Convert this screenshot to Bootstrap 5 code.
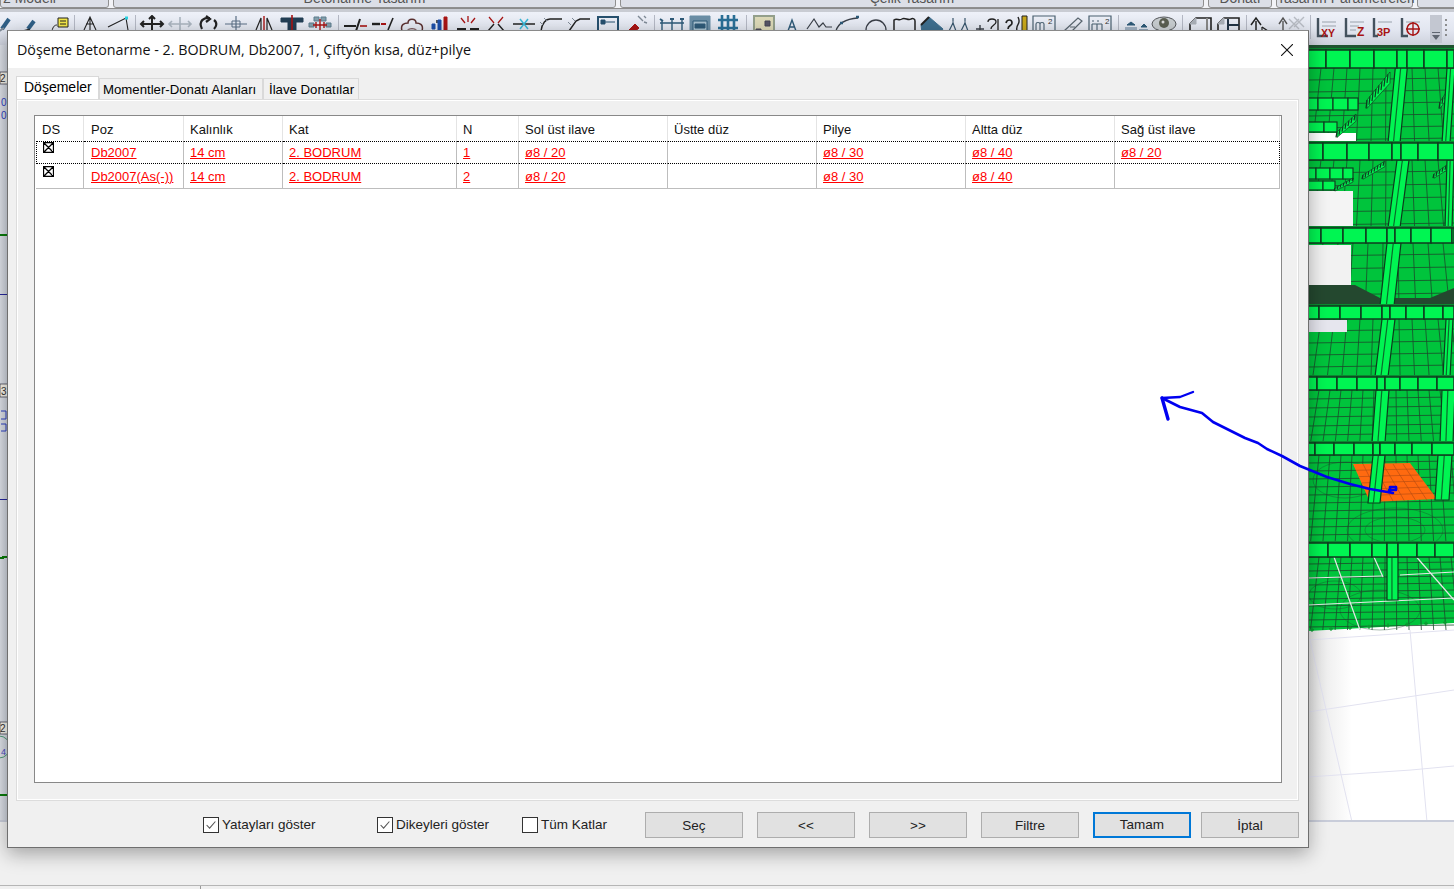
<!DOCTYPE html>
<html lang="tr">
<head>
    <meta charset="UTF-8">
    <meta name="viewport" content="width=device-width, initial-scale=1.0">
    <title>Döşeme Betonarme</title>
    <link href="https://cdn.jsdelivr.net/npm/bootstrap@5.3.1/dist/css/bootstrap.min.css" rel="stylesheet">
    <style>
        html, body { height: 100%; overflow: hidden; }
        body { background-color: #f0f0f0; font-family: "Liberation Sans", Arial, sans-serif; font-size: 13px; color: #000; }
        .app-shell { position: relative; width: 1454px; height: 889px; }

        /* ribbon behind the dialog */
        .ribbon-tabs { height: 9px; overflow: hidden; background: #f2f3f7; border-bottom: 1px solid #8b8b8b; align-items: flex-end; }
        .ribbon-tab { height: 30px; flex: none; margin-right: 4px; text-align: center; white-space: nowrap; font-size: 14px; line-height: 16px; color: #555; padding-top: 11px;
            background: #dcdfe7; border: 1px solid #8f8f8f; border-radius: 0 0 3px 3px; }
        .rt-1 { width: 109px; text-align: left; padding-left: 2px; }
        .rt-2 { width: 503px; }
        .rt-3 { width: 584px; }
        .rt-4 { width: 64px; }
        .rt-5 { width: 137px; }
        .rt-6 { width: 60px; margin-right: 0; }
        .ribbon-gap { height: 3px; background: #c9ccd3; }
        .ribbon-bar { height: 33px; background: linear-gradient(#eef1f9, #e2e6f0 55%, #cdd1dc); padding-top: 3px; overflow: hidden; }
        .tool-slot { width: 28px; height: 28px; flex: none; }
        .tool-slot svg { display: block; }
        .tool-sep { width: 1px; height: 24px; margin: 0 3.5px; flex: none; background: #b4b8c4; }
        .tool-sep.is-tight { margin: 0 1.5px; }
        .tool-sep.is-mid { margin: 0 2.5px; }
        .first-gap { width: 0; margin-left: -12px; flex: none; }
        .grip { width: 12px; height: 28px; margin: 0 0 0 4px; flex: none; background: #c3c7d1; }
        .grip svg { display: block; }
        .grip-dots { width: 8px; flex: none; }

        .work-area { height: 777px; background: #dfe2ea; border-bottom: 2px solid #c9cdda; }
        .left-strip { width: 8px; flex: none; background: linear-gradient(90deg, #dde0e7, #cbd0da); }
        .work-fill { flex: 1 1 auto; }
        .scene { width: 146px; height: 775px; flex: none; background: #fff; display: block; }
        .status-line { margin-top: 63px; height: 1px; background: #b5b5b5; }
        .status-tick { width: 1px; height: 3px; margin-left: 200px; background: #999; }

        /* dialog window */
        .dlg-window { position: absolute; left: 7px; top: 30px; width: 1302px; height: 818px; background: #f0f0f0;
            border: 1px solid #6f6f6f; border-top-color: #8a8a8a; box-shadow: 0 6px 18px rgba(0, 0, 0, .32); }
        .dlg-title { height: 37px; background: #fff; padding-left: 9px; padding-right: 15px; font-family: "Open Sans", sans-serif; font-size: 14.3px; color: #111; }
        .dlg-close { width: 12px; height: 12px; padding: 0; border: 0; background: none; line-height: 0; }

        .dlg-tabs { margin: 8px 0 0 8px; border-bottom: 0; height: 23px; align-items: flex-end; }
        .dlg-tabs .nav-link { height: 21px; padding: 2px 0 0 3px; margin: 0; font-size: 13.2px; line-height: 18px; color: #000; background: #f0f0f0;
            border: 1px solid #d9d9d9; border-bottom: 0; border-radius: 0; }
        .dlg-tabs .tab-mom { width: 164px; }
        .dlg-tabs .tab-ilave { width: 96px; padding-left: 5px; }
        .dlg-tabs .nav-link.active { width: 83px; height: 23px; padding: 1px 0 0 7px; font-size: 14px; background: #fff; color: #000; border-color: #d9d9d9; }
        .tab-panel { height: 702px; margin: 0 9px 0 8px; padding: 15px 16px 17px 17px; background: #f0f0f0; border: 1px solid #dcdcdc; box-shadow: inset 1px 1px 0 #fff, inset -1px -1px 0 #fff; }
        .grid-box { height: 668px; padding: 0 0 0 1px; background: #fff; border: 1px solid #888; }

        .grid-table { table-layout: fixed; width: 1244px; margin: 0; border-collapse: separate; border-spacing: 0; font-size: 13px; line-height: 16px; --bs-table-bg: transparent; }
        .grid-table > thead > tr > th, .grid-table > tbody > tr > td { padding: 0 0 0 6px; border: 0; overflow: hidden; white-space: nowrap; }
        .grid-table > thead > tr > th { height: 25px; padding-top: 6px; font-weight: 400; color: #111; border-right: 1px solid #e4e4e4; vertical-align: top; }
        .grid-table > tbody > tr > td { height: 25px; padding-top: 5px; vertical-align: top; border-right: 1px solid #bdbdbd; border-bottom: 1px solid #bdbdbd; }
        .grid-table > tbody > tr:first-child > td { height: 23px; padding-top: 3px; border-top: 1px dotted #000; border-bottom: 1px dotted #000; }
        .grid-table > tbody > tr:first-child > td:first-child { border-left: 1px dotted #000; padding-left: 6px; padding-top: 0; }
        .grid-table > tbody > tr:first-child > td:last-child { border-right: 1px dotted #000; }
        .grid-table > tbody > tr > td:first-child { padding-left: 7px; padding-top: 2px; }
        .grid-table th:nth-child(2), .grid-table td:nth-child(2) { padding-left: 7px; }
        .c-ds { width: 48px; } .c-poz { width: 100px; } .c-kal { width: 99px; } .c-kat { width: 174px; } .c-n { width: 62px; }
        .c-d { width: 149px; } .c-sag { width: 165px; }
        .grid-link { color: #f00; text-decoration: underline; }
        .ds-mark { display: block; margin-top: 0; }

        .dlg-foot { height: 26px; margin-top: 11px; padding-left: 195px; font-size: 13.5px; }
        .foot-check { margin: 0; padding: 0; min-height: 0; color: #222; }
        .foot-check label { padding-top: 1px; }
        .foot-check .form-check-input { float: none; flex: none; width: 16px; height: 16px; margin: 0 3px 0 0; border: 1px solid #333; border-radius: 0; box-shadow: none; background-color: #fff; }
        .foot-check .form-check-input:checked { background-color: #fff; border-color: #333;
            background-image: url("data:image/svg+xml,%3csvg xmlns='http://www.w3.org/2000/svg' viewBox='0 0 16 16'%3e%3cpath fill='none' stroke='%23555' stroke-width='1.2' d='M3 8l3.4 3.6L13 4'/%3e%3c/svg%3e"); background-size: 100%; }
        .chk-a { width: 174px; } .chk-b { width: 145px; } .chk-c { width: 123px; }
        .foot-btn { width: 98px; height: 26px; padding: 1px 0 0; margin-right: 14px; font-size: 13.5px; line-height: 23px; color: #222; background: #e1e1e1; border: 1px solid #adadad; border-radius: 0; }
        .foot-btn.is-default { border: 2px solid #0078d7; padding-top: 0; line-height: 22px; margin-right: 10px; }
        .foot-btn.is-last { margin-right: 0; }

        .arrow-ink { position: absolute; left: 0; top: 0; width: 1454px; height: 889px; pointer-events: none; }
    </style>
</head>
<body>
<div class="app-shell">
    <!-- Ribbon -->
    <div class="ribbon-tabs d-flex">
        <div class="ribbon-tab rt-1">2 Modeli</div>
        <div class="ribbon-tab rt-2">Betonarme Tasarım</div>
        <div class="ribbon-tab rt-3">Çelik Tasarım</div>
        <div class="ribbon-tab rt-4">Donatı</div>
        <div class="ribbon-tab rt-5">Tasarım Parametreleri</div>
        <div class="ribbon-tab rt-6"></div>
    </div>
    <div class="ribbon-gap"></div>
    <div class="ribbon-bar d-flex" id="toolBar"></div>

    <!-- Drawing area -->
    <div class="work-area d-flex">
        <svg class="left-strip" viewBox="0 45 8 775" width="8" height="775">
            <rect x="0" y="72" width="8" height="12" fill="#f4f1e8" stroke="#334" stroke-width=".7"/>
            <text x="0" y="82" font-size="10" font-family="Liberation Sans" fill="#333">2</text>
            <text x="1" y="106" font-size="10" font-family="Liberation Sans" fill="#2a3fc0">0</text>
            <text x="1" y="119" font-size="10" font-family="Liberation Sans" fill="#2a3fc0">0</text>
            <rect x="0" y="234" width="8" height="2" fill="#0a7a0a"/>
            <rect x="0" y="294" width="8" height="1" fill="#26269a"/>
            <rect x="0" y="384" width="8" height="13" fill="#f4f1e8" stroke="#334" stroke-width=".7"/>
            <text x="1" y="395" font-size="10" font-family="Liberation Sans" fill="#333">3</text>
            <path d="M1 411h5v8h-5M1 424h5v7h-5" fill="none" stroke="#2a3fc0"/>
            <rect x="0" y="499" width="8" height="1" fill="#26269a"/>
            <path d="M0 558h3v-1h5" fill="none" stroke="#0a7a0a" stroke-width="2"/>
            <rect x="0" y="722" width="8" height="12" fill="#f4f1e8" stroke="#334" stroke-width=".7"/>
            <text x="0" y="732" font-size="10" font-family="Liberation Sans" fill="#333">2</text>
            <circle cx="-1" cy="747" r="11" fill="none" stroke="#2b8a5a" stroke-width=".8"/>
            <text x="1" y="755" font-size="9" font-family="Liberation Sans" fill="#4a4ac0">4</text>
            <rect x="0" y="794" width="8" height="2" fill="#0a7a0a"/>
        </svg>
        <div class="work-fill"></div>
        <svg class="scene" id="scene" viewBox="1308 45 146 775"></svg>
    </div>
    <div class="status-line"></div>
    <div class="status-tick"></div>

    <!-- Dialog -->
    <div class="dlg-window">
        <div class="dlg-title d-flex align-items-center justify-content-between">
            <span>Döşeme Betonarme - 2. BODRUM, Db2007, 1, Çiftyön kısa, düz+pilye</span>
            <button type="button" class="dlg-close" aria-label="Close">
                <svg width="12" height="12" viewBox="0 0 12 12"><path d="M0 0L12 12M12 0L0 12" stroke="#111" stroke-width="1.1"/></svg>
            </button>
        </div>
        <ul class="nav nav-tabs dlg-tabs">
            <li class="nav-item"><a class="nav-link active" href="#">Döşemeler</a></li>
            <li class="nav-item"><a class="nav-link tab-mom" href="#">Momentler-Donatı Alanları</a></li>
            <li class="nav-item"><a class="nav-link tab-ilave" href="#">İlave Donatılar</a></li>
        </ul>
        <div class="tab-panel">
            <div class="grid-box">
                <table class="table grid-table">
                    <colgroup>
                        <col class="c-ds"><col class="c-poz"><col class="c-kal"><col class="c-kat"><col class="c-n">
                        <col class="c-d"><col class="c-d"><col class="c-d"><col class="c-d"><col class="c-sag">
                    </colgroup>
                    <thead>
                    <tr>
                        <th>DS</th><th>Poz</th><th>Kalınlık</th><th>Kat</th><th>N</th>
                        <th>Sol üst ilave</th><th>Üstte düz</th><th>Pilye</th><th>Altta düz</th><th>Sağ üst ilave</th>
                    </tr>
                    </thead>
                    <tbody>
                    <tr>
                        <td><svg class="ds-mark" width="11" height="11" viewBox="0 0 11 11"><path d="M.5.5h10v10H.5zM.5.5l10 10M10.5.5l-10 10" fill="none" stroke="#000" stroke-width="1.3"/></svg></td>
                        <td><a class="grid-link" href="#">Db2007</a></td>
                        <td><a class="grid-link" href="#">14 cm</a></td>
                        <td><a class="grid-link" href="#">2. BODRUM</a></td>
                        <td><a class="grid-link" href="#">1</a></td>
                        <td><a class="grid-link" href="#">ø8 / 20</a></td>
                        <td></td>
                        <td><a class="grid-link" href="#">ø8 / 30</a></td>
                        <td><a class="grid-link" href="#">ø8 / 40</a></td>
                        <td><a class="grid-link" href="#">ø8 / 20</a></td>
                    </tr>
                    <tr>
                        <td><svg class="ds-mark" width="11" height="11" viewBox="0 0 11 11"><path d="M.5.5h10v10H.5zM.5.5l10 10M10.5.5l-10 10" fill="none" stroke="#000" stroke-width="1.3"/></svg></td>
                        <td><a class="grid-link" href="#">Db2007(As(-))</a></td>
                        <td><a class="grid-link" href="#">14 cm</a></td>
                        <td><a class="grid-link" href="#">2. BODRUM</a></td>
                        <td><a class="grid-link" href="#">2</a></td>
                        <td><a class="grid-link" href="#">ø8 / 20</a></td>
                        <td></td>
                        <td><a class="grid-link" href="#">ø8 / 30</a></td>
                        <td><a class="grid-link" href="#">ø8 / 40</a></td>
                        <td></td>
                    </tr>
                    </tbody>
                </table>
            </div>
        </div>
        <div class="dlg-foot d-flex align-items-center">
            <div class="form-check foot-check chk-a d-flex align-items-center">
                <input class="form-check-input" type="checkbox" id="chkYatay" checked>
                <label for="chkYatay">Yatayları göster</label>
            </div>
            <div class="form-check foot-check chk-b d-flex align-items-center">
                <input class="form-check-input" type="checkbox" id="chkDikey" checked>
                <label for="chkDikey">Dikeyleri göster</label>
            </div>
            <div class="form-check foot-check chk-c d-flex align-items-center">
                <input class="form-check-input" type="checkbox" id="chkKat">
                <label for="chkKat">Tüm Katlar</label>
            </div>
            <button type="button" class="btn foot-btn">Seç</button>
            <button type="button" class="btn foot-btn">&lt;&lt;</button>
            <button type="button" class="btn foot-btn">&gt;&gt;</button>
            <button type="button" class="btn foot-btn">Filtre</button>
            <button type="button" class="btn foot-btn is-default">Tamam</button>
            <button type="button" class="btn foot-btn is-last">İptal</button>
        </div>
    </div>

    <!-- Hand drawn arrow on top of the screenshot -->
    <svg class="arrow-ink" viewBox="0 0 1454 889">
        <g fill="none" stroke="#0000f0" stroke-linecap="round" stroke-linejoin="round">
            <path stroke-width="2.6" d="M1162 398L1180 407L1202 413L1213 422L1227 429L1245 438L1258 443L1267 449L1282 456L1300 466L1327 477L1350 484L1370 489L1393 493"/>
            <path stroke-width="2.6" d="M1389 490h7v-3h-6v5"/>
            <path stroke-width="3.4" d="M1162 398L1168 419"/>
            <path stroke-width="2.4" d="M1162 398L1180 397L1193 392"/>
        </g>
    </svg>
</div>

<!-- Bootstrap JS -->
<script src="https://cdn.jsdelivr.net/npm/bootstrap@5.3.1/dist/js/bootstrap.bundle.min.js"></script>
<script>
    // Toolbar icons, 28x28 box. Dialog hides everything under y=30 (slot y=15)
    const K = '#222', G = '#7f8a96', R = '#a81414', B = '#2f5f86';
    const p = (d, c = K, w = 1.4, f = 'none') => `<path d="${d}" stroke="${c}" stroke-width="${w}" fill="${f}"/>`;
    const icons = [
        p('M14 14L21 4', B, 4) + p('M10 17L16 13', G, 2),
        p('M12 14L18 6', B, 4) + p('M6 16L14 14', K, 1),
        p('M8 16C9 11 11 10 13 10', K, 1) + p('M14 3h10v9H14z', K, 1, '#f4e94a') + p('M16 6h6M16 9h6', K, 1),
        ':',
        p('M8 15L14 2L20 15M10 9h8M14 2v13', K, 1.1),
        p('M4 12L22 3L24 15', K, 1.1) + p('M21 3h3', '#28d0e0', 3),
        ';',
        p('M3 9h22M14 1v15M6 6L3 9L6 12M22 6L25 9L22 12M11 4L14 1L17 4', K, 2),
        p('M3 9h22M14 2v14M6 6L3 9L6 12M22 6L25 9L22 12', '#aab4bf', 1.6),
        p('M8 14C4 6 10 2 16 3M20 5C24 8 22 12 20 14M12 1l4 3-4 3', K, 2.2),
        p('M3 9h22M14 1v14', '#5b6f85', 1.2) + p('M10 6h8v6h-8z', '#5b6f85', 1),
        p('M6 15L11 3V15M22 15L17 3V15', K, 1.2) + p('M14 1v15', R, 1.4),
        p('M3 3h22v4H3z', '#233f55', 1, '#233f55') + p('M10 7h8v9h-8z', '#233f55', 1, '#233f55') + p('M14 0v16', R, 1.6),
        p('M8 2h5v4H8zM15 2h5v4h-5zM3 8h5v4H3zM20 8h5v4h-5z', '#5c7c8e', 1, '#84a0ad') + p('M7 10h14M14 4v12M10 7v6M18 7v6', R, 1.4),
        '|',
        p('M2 11h12M18 4L14 16', K, 2) + p('M18 11h7', R, 1.6),
        p('M2 9h8', K, 2.4) + p('M11 9h5', R, 2) + p('M18 15L23 3', K, 1.6),
        p('M4 16C2 9 7 8 10 8C10 3 18 3 18 8C21 8 26 9 24 16', '#5a2f2f', 1.5) + p('M9 16c0-3 10-3 10 0', '#5a2f2f', 1),
        p('M11 5v3', K, 1.5) + p('M6 9h3v5H6z', '#1d4fa8', 1, '#1d4fa8') + p('M12 5h3v11h-3z', '#1d4fa8', 1, '#1d4fa8') + p('M18 2h3v14h-3z', R, 1, R),
        p('M3 14h9M16 14h9', K, 2.2) + p('M14 1v6M7 3l4 5M21 3l-4 5', R, 1.3),
        p('M7 2l5 6M21 2l-5 6', R, 1.2) + p('M6 16L12 9M22 16L16 9', K, 1.4),
        p('M3 9h22', K, 1.5) + p('M10 4L18 14M18 4L10 14', '#38b8d8', 1.5),
        p('M3 16C4 8 8 4 12 4H24', K, 1.4) + p('M6 3l3 3M2 7l3 3', G, 1),
        p('M3 16L10 6L14 4H24', K, 1.4) + p('M6 3l3 3M2 7l3 3', G, 1),
        p('M4 2h20v17H4z', '#26506e', 2) + p('M7 5h4v4H7z', '#26506e', 1, '#26506e') + p('M7 7h14', '#26506e', 1),
        p('M6 16L13 9l4 4-6 5z', R, 1, R) + p('M18 3l3 3M22 1l2 2M16 1l2 2M22 7l3 1', G, 1.4),
        '|',
        p('M4 16V5M14 16V5M24 16V5M2 8h24', '#2e5a78', 1.4) + p('M2 4l3 2M12 4h4M22 4h4', '#2e5a78', 2),
        p('M4 1h20v18H4z', '#6b8ea6', 1, '#6b8ea6') + p('M7 6h14v10H7z', '#2e5a78', 1, '#a7c0cf') + p('M9 9h10v4H9z', '#2e5a78', 1, '#2e5a78'),
        p('M4 5h20M4 13h20M8 0v17M14 0v17M20 0v17', '#2a6f96', 2.6),
        '|',
        p('M4 1h20v20H4z', '#94a08c', 2, '#dcd9b8') + p('M15 6h5v5h-5zM6 14h5v5H6z', '#445', 1, '#556'),
        p('M10 16L14 5L18 16M11 12h6', '#2e5a78', 1.4),
        p('M1 14L8 4L13 12L17 8L20 12h6', '#3a3f48', 1.2),
        p('M2 16C4 8 12 4 24 3', '#3a3f48', 1.3) + p('M6 8h3M22 2h3', '#2e5a78', 2.4),
        `<circle cx="14" cy="15" r="10" fill="none" stroke="#3a3f48" stroke-width="1.3"/>`,
        p('M4 16V5C7 3 9 6 12 4C15 2 18 6 21 4C23 3 25 4 25 6V16', '#222', 1.5),
        p('M3 10L11 2L25 14L22 18H4z', '#3f6f8f', 1, '#3f6f8f') + p('M3 10L11 2', K, 2),
        p('M7 3v3M6 7h2M7 8l-4 8M7 8l3 8M19 3v3M18 7h2M19 8l-4 8M19 8l3 8', '#39566d', 1.2),
        p('M2 14h8M6 10v8', '#3a3f48', 1.4) + p('M14 7C14 3 22 3 22 7C22 10 17 10 17 14M24 4v13', K, 1.3),
        p('M4 8C5 4 10 4 10 8C10 11 6 10 6 14M6 17v1', K, 1.7) + p('M15 16C13 8 20 10 16 2', K, 1.4) + p('M20 1h5v17h-5z', K, 1, '#c8a81c'),
        p('M3 1h22v16H3z', '#4a6070', 1.2) + p('M6 15v-6c0-2 4-2 4 0v6M10 9c0-2 4-2 4 0v6', '#4a6070', 1.1) + '<text x="18" y="9" font-size="8" font-family="Liberation Sans" fill="#333">2</text>',
        p('M6 16L20 3L24 6L12 18', '#5a6670', 1.2) + p('M12 12h5', '#5a6670', 1),
        p('M3 1h22v16H3z', '#4a6070', 1.2) + p('M6 6h2M11 6h2M6 15V9M11 15V9M16 15V9M6 9h10', '#4a6070', 1.1) + '<text x="19" y="9" font-size="8" font-family="Liberation Sans" fill="#333">2</text>',
        '|',
        p('M5 10l4-3 4 3z', '#2e5a78', 1, '#2e5a78') + p('M3 13h12M3 15h12', '#5c7a94', 1.2) + p('M19 12l3-3 3 3z', '#2e5a78', 1, '#2e5a78') + p('M17 15h9', '#5c7a94', 1.2),
        `<ellipse cx="14" cy="9" rx="12" ry="7" fill="#c8cdd0" stroke="#55585c"/><circle cx="14" cy="8" r="5" fill="#5b5f52"/><circle cx="13" cy="7" r="1.5" fill="#ddd"/>`,
        '|',
        p('M10 3H25V20H4V9z', K, 1.6) + p('M4 9h6V3z', '#aab0b8', 1, '#aab0b8') + p('M21 3v17', '#888', 2),
        p('M10 3H25V20H4V9z', K, 1.6) + p('M14 4v15M14 10h11', '#234', 2) + p('M4 9h6V3z', '#aab0b8', 1, '#aab0b8'),
        '|',
        p('M6 18V6M1 10L6 3L11 10', K, 1.5) + p('M12 12L18 16L24 20', K, 1.4) + p('M12 12V19', K, 1.2),
        p('M5 18V6M1 9L5 3L9 9', '#555', 1.4) + p('M11 4L21 14M21 4L11 14M16 2L26 12M26 2L16 12', '#b8bcc4', 1.4),
        '|',
        p('M4 3V21H14', '#44525e', 2.4) + p('M8 7h14M8 11h14', '#9aa2ac', 1) + `<text x="7" y="22" font-size="10.5" font-weight="700" font-family="Liberation Sans" fill="${R}">XY</text>`,
        p('M4 3V21H14', '#44525e', 2.4) + p('M8 7h14M8 11h9M8 15h6', '#9aa2ac', 1) + `<text x="15" y="21" font-size="12" font-weight="700" font-family="Liberation Sans" fill="${R}">Z</text>`,
        p('M4 3V21H8', '#44525e', 2.4) + p('M8 7h14', '#9aa2ac', 1) + `<text x="7" y="21" font-size="11" font-weight="700" font-family="Liberation Sans" fill="${R}">3P</text>`,
        p('M4 3V21H10', '#44525e', 2.4) + p('M8 7h14', '#9aa2ac', 1) + `<circle cx="15" cy="14" r="6" fill="none" stroke="${R}" stroke-width="1.6"/>` + p('M8 14h14M15 7v14', R, 1.4)
    ];

    const toolBar = document.getElementById('toolBar');
    let html = '<div class="first-gap"></div>';
    icons.forEach(icon => {
        if (icon === '|') html += '<div class="tool-sep"></div>';
        else if (icon === ':') html += '<div class="tool-sep is-tight"></div>';
        else if (icon === ';') html += '<div class="tool-sep is-mid"></div>';
        else html += `<div class="tool-slot"><svg width="28" height="28" viewBox="0 0 28 28">${icon}</svg></div>`;
    });
    html += '<div class="grip"><svg width="12" height="28" viewBox="0 0 12 28"><path d="M2 17h8v1H2zM2 20h8l-4 5z" fill="#5f6670"/></svg></div>';
    html += '<div class="grip-dots"><svg width="8" height="28" viewBox="0 0 8 28"><path d="M4 4v2M4 9v2M4 14v2M4 19v2" stroke="#777" stroke-width="1.6"/></svg></div>';
    toolBar.innerHTML = html;

    // 3D model behind the dialog
    const BASE = '#00c43c', BRIGHT = '#00f552', LINE = '#1c4a2c';
    let s = '';
    const rect = (x, y, w, h, fill, extra = '') => { s += `<rect x="${x}" y="${y}" width="${w}" height="${h}" fill="${fill}" ${extra}/>`; };
    const line = (x1, y1, x2, y2, c = LINE, w = 0.8) => { s += `<line x1="${x1}" y1="${y1}" x2="${x2}" y2="${y2}" stroke="${c}" stroke-width="${w}"/>`; };
    const poly = (pts, fill, st = 'none', w = 0.7) => { s += `<polygon points="${pts}" fill="${fill}" stroke="${st}" stroke-width="${w}"/>`; };

    // floor
    s += '<defs><linearGradient id="floorG" x1="0" x2="1" y1="0" y2="0"><stop offset="0" stop-color="#e4e4e4"/><stop offset=".3" stop-color="#fff"/></linearGradient></defs>';
    rect(1308, 625, 146, 197, 'url(#floorG)');
    [[1308, 777, 1411, 770], [1411, 770, 1454, 766], [1308, 712, 1454, 690], [1310, 640, 1352, 822], [1410, 630, 1427, 822], [1308, 640, 1454, 630]]
        .forEach(l => line(l[0], l[1], l[2], l[3], '#e2e2f0', 1));

    // model body
    poly('1308,45 1454,45 1454,623 1308,631', BASE);

    // slab mesh, each band is one storey
    [[68, 143, 12, 11], [160, 228, 13, 11], [243, 306, 13, 13], [319, 377, 12, 11], [390, 443, 9, 9], [455, 543, 8, 9], [557, 630, 7, 9]].forEach(b => {
        for (let y = b[0]; y < b[1]; y += b[2]) line(1308, y, 1454, y - 2);
        const cx = 1390;
        for (let x = 1308; x < 1454; x += b[3] + 2) {
            const k = (x - cx) * 0.12;
            line(x, b[0], x + k, b[1]);
        }
    });
    // the lower slabs have round meshes around the column heads
    [[1345, 480, 32, 18], [1395, 530, 48, 22], [1395, 530, 30, 13], [1380, 610, 40, 20], [1335, 595, 26, 14]].forEach(e => {
        s += `<ellipse cx="${e[0]}" cy="${e[1]}" rx="${e[2]}" ry="${e[3]}" fill="none" stroke="${LINE}" stroke-width=".7" stroke-opacity=".55"/>`;
    });

    // openings that show the floor behind
    rect(1308, 133, 48, 10, '#fff');
    rect(1308, 191, 45, 36, '#f4f4f4');
    rect(1308, 245, 43, 40, '#f2f2f2');
    rect(1308, 320, 39, 12, '#e6e6ee');

    // dark band under the third storey
    poly('1308,285 1355,285 1380,298 1430,298 1454,288 1454,306 1308,306', '#24482f');

    // short beams on the left side
    [[98, 12, [1308, 1318, 1333, 1348, 1358]], [122, 10, [1308, 1324, 1337]], [168, 11, [1308, 1316, 1330, 1343, 1353]], [181, 9, [1308, 1323, 1335]]].forEach(b => {
        const xs = b[2];
        for (let i = 0; i < xs.length - 1; i++) rect(xs[i], b[0], xs[i + 1] - xs[i], b[1], BRIGHT, 'stroke="#123d22" stroke-width="1.2"');
    });

    // hatch of the edge beams
    [[1367, 72, 23, 28], [1337, 114, 19, 18], [1440, 80, 14, 22], [1363, 161, 22, 14], [1335, 178, 18, 10], [1434, 160, 20, 14]].forEach(h => {
        poly(`${h[0]},${h[1] + h[3]} ${h[0] + h[2]},${h[1]} ${h[0] + h[2]},${h[1] + h[3] * .4} ${h[0]},${h[1] + h[3] * 1.3}`, BRIGHT, '#123d22');
        for (let i = 0; i <= h[2]; i += 3) line(h[0] + i, h[1] + h[3] * (1 - i / h[2]), h[0] + i - 1, h[1] + h[3] * (1.3 - i / h[2]), '#0f3a1f', 1.2);
    });

    // orange slab that is selected
    poly('1353,464 1410,463 1437,499 1370,502', '#ff6a10');
    for (let i = 1; i < 6; i++) {
        line(1353 + i * 3, 464 + i * 6.3, 1410 + i * 4.5, 463 + i * 6, '#b04a10', 0.6);
        line(1353 + i * 10, 464, 1370 + i * 11.5, 501, '#b04a10', 0.6);
    }
    rect(1433, 453, 3, 3, '#c81010'); rect(1450, 453, 3, 3, '#c81010');

    // white grid seen through the lowest slab
    [[1308, 578, 1382, 576], [1400, 575, 1454, 572], [1308, 605, 1454, 598], [1334, 557, 1360, 630], [1373, 555, 1383, 577], [1413, 553, 1454, 600]]
        .forEach(l => line(l[0], l[1], l[2], l[3], '#e8e8e8', 1.2));

    // columns, slightly leaning towards the bottom left
    [[1397, 50, 1388, 143, 12], [1397, 160, 1388, 228, 12], [1387, 243, 1380, 306, 14], [1382, 319, 1375, 377, 13], [1376, 390, 1372, 443, 13], [1373, 455, 1368, 503, 12],
     [1387, 557, 1387, 600, 11], [1447, 68, 1442, 143, 8], [1447, 160, 1445, 228, 7], [1446, 319, 1443, 377, 7], [1442, 390, 1440, 443, 13], [1438, 455, 1435, 500, 14]].forEach(c => {
        const w = c[4];
        poly(`${c[0]},${c[1]} ${c[0] + w},${c[1]} ${c[2] + w},${c[3]} ${c[2]},${c[3]}`, BRIGHT, '#0d3a1c', 1.2);
        line(c[0] + w * .45, c[1], c[2] + w * .45, c[3], '#0a6a2a', 1.2);
    });

    // main beams at each storey, each with a darker top face
    [[50, 18, [1308, 1326, 1350, 1374, 1397, 1407, 1424, 1447, 1454]],
     [143, 17, [1308, 1323, 1347, 1369, 1392, 1401, 1418, 1438, 1454]],
     [228, 15, [1308, 1321, 1343, 1366, 1387, 1395, 1411, 1431, 1452, 1454]],
     [306, 13, [1308, 1319, 1340, 1361, 1382, 1390, 1406, 1424, 1443, 1454]],
     [377, 13, [1308, 1317, 1337, 1357, 1377, 1385, 1400, 1418, 1437, 1454]],
     [443, 12, [1308, 1315, 1334, 1354, 1373, 1380, 1395, 1412, 1432, 1454]],
     [543, 14, [1308, 1328, 1350, 1372, 1387, 1398, 1417, 1435, 1454]]].forEach(b => {
        const xs = b[2];
        rect(1308, b[0] - 2, 146, 2, '#0a8a30');
        for (let i = 0; i < xs.length - 1; i++) rect(xs[i], b[0], xs[i + 1] - xs[i], b[1], BRIGHT, 'stroke="#0f3a1f" stroke-width="1.5"');
    });
    rect(1308, 45, 146, 3, '#1f5330');

    // supports along the lower edge
    for (let x = 1312; x < 1454; x += 19) {
        const y = 630 - (x - 1308) * 0.055;
        s += `<path d="M${x - 2} ${y}h4M${x} ${y - 2}v4" stroke="#0a9a30" stroke-width="1.4"/>`;
    }

    document.getElementById('scene').innerHTML = s;
</script>
</body>
</html>
